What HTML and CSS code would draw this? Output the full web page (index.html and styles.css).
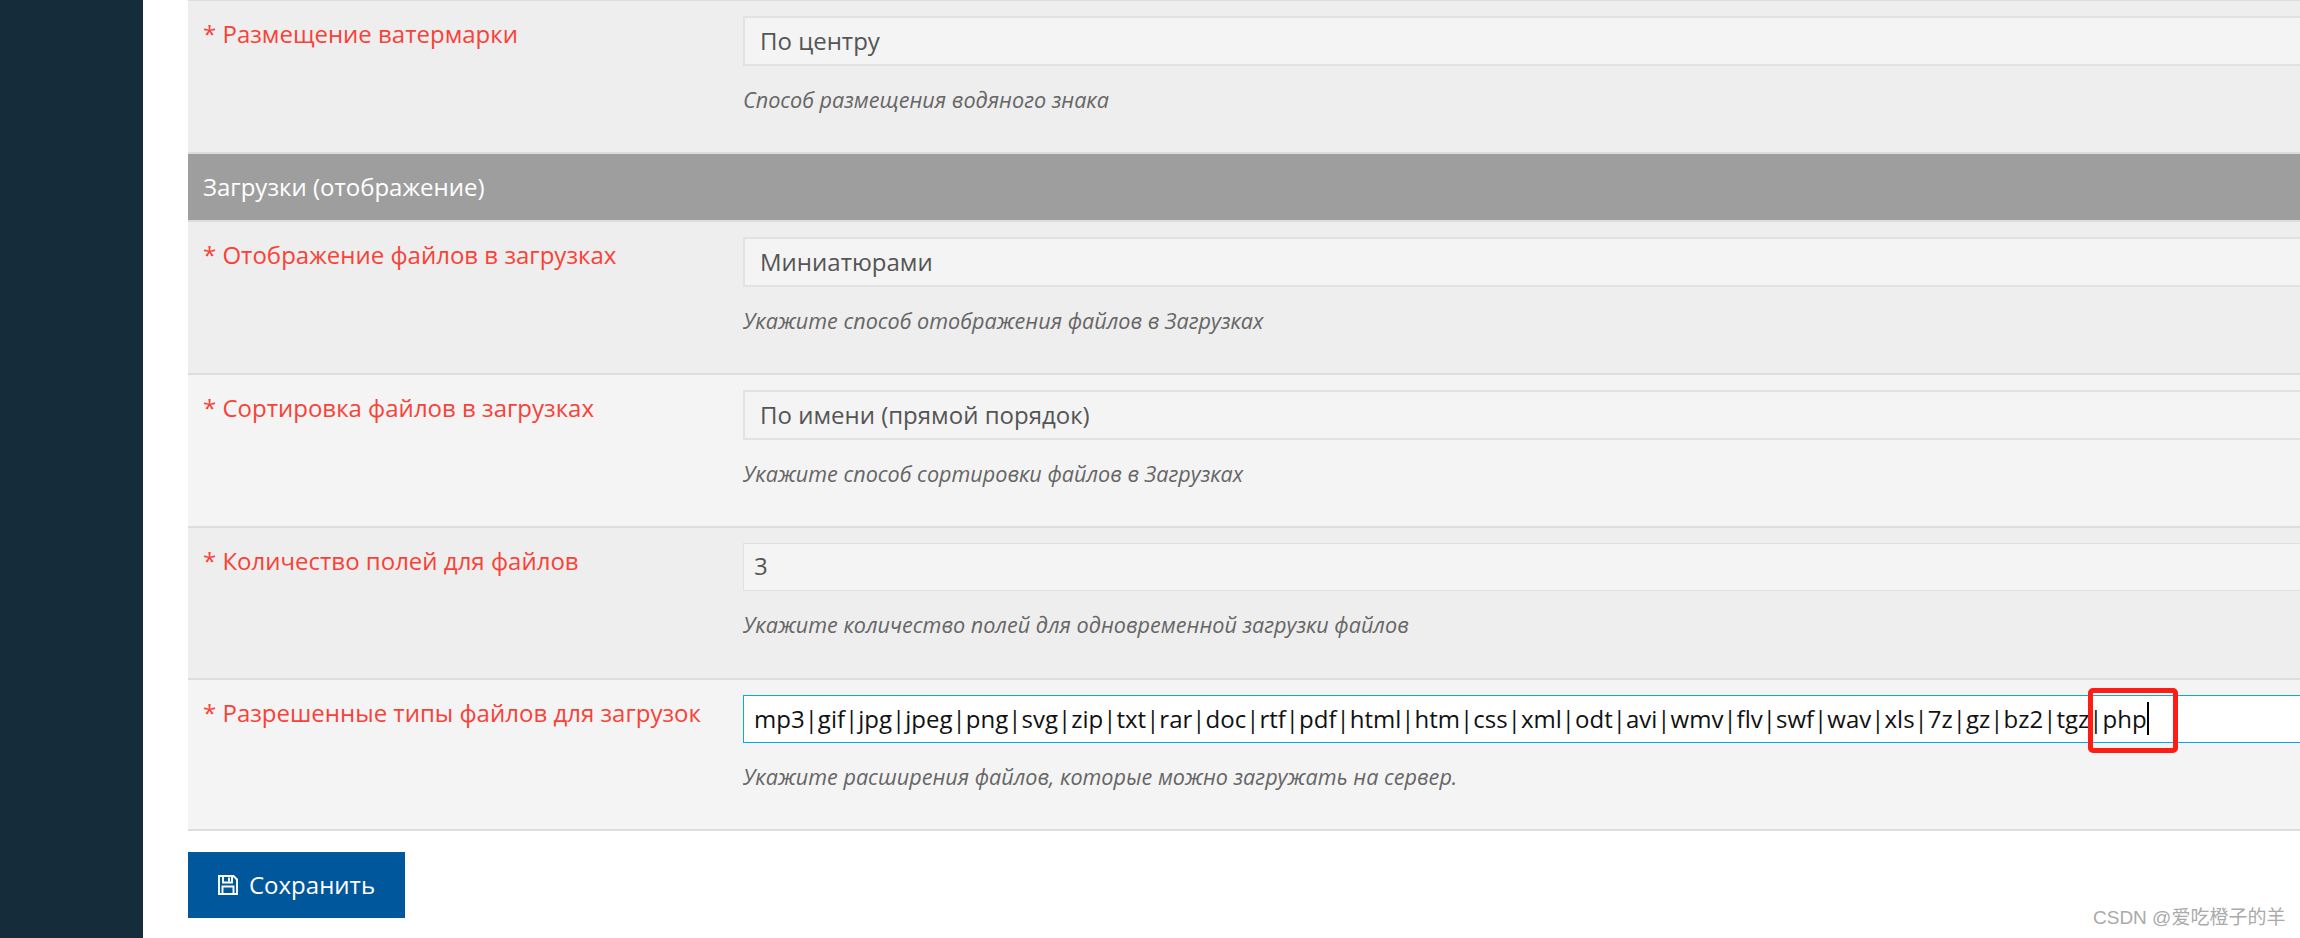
FILE: index.html
```html
<!DOCTYPE html>
<html lang="ru">
<head>
<meta charset="utf-8">
<title>Настройки</title>
<link rel="stylesheet" href="styles.css">
</head>
<body>
<div class="layout">
  <aside class="sidebar"></aside>
  <main class="content">
    <form class="settings">
      <div class="row row-alt">
        <div class="label">* Размещение ватермарки</div>
        <div class="control">
          <div class="select">По центру</div>
          <div class="help">Способ размещения водяного знака</div>
        </div>
      </div>
      <div class="section">Загрузки (отображение)</div>
      <div class="row row-alt">
        <div class="label">* Отображение файлов в загрузках</div>
        <div class="control">
          <div class="select">Миниатюрами</div>
          <div class="help">Укажите способ отображения файлов в Загрузках</div>
        </div>
      </div>
      <div class="row">
        <div class="label">* Сортировка файлов в загрузках</div>
        <div class="control">
          <div class="select">По имени (прямой порядок)</div>
          <div class="help">Укажите способ сортировки файлов в Загрузках</div>
        </div>
      </div>
      <div class="row row-alt">
        <div class="label">* Количество полей для файлов</div>
        <div class="control">
          <div class="input">3</div>
          <div class="help">Укажите количество полей для одновременной загрузки файлов</div>
        </div>
      </div>
      <div class="row">
        <div class="label">* Разрешенные типы файлов для загрузок</div>
        <div class="control">
          <div class="input input-focus"><span class="typed">mp3|gif|jpg|jpeg|png|svg|zip|txt|rar|doc|rtf|pdf|html|htm|css|xml|odt|avi|wmv|flv|swf|wav|xls|7z|gz|bz2|tgz|php</span><span class="mark"></span></div>
          <div class="help">Укажите расширения файлов, которые можно загружать на сервер.</div>
        </div>
      </div>
    </form>
    <button class="save" type="button">
      <svg class="save-icon" viewBox="0 0 20 20" aria-hidden="true"><path d="M1 1H15.5L19 4.5V19H1Z M5 1.5V7.5H14V1.5 M11 2.6V6.2 M4.5 19V11.5H15.5V19" fill="none" stroke="#fff" stroke-width="1.9"/></svg>
      <span>Сохранить</span>
    </button>
  </main>
</div>
<div class="watermark">CSDN @爱吃橙子的羊</div>
</body>
</html>
```
FILE: styles.css
```css
* { box-sizing: border-box; }
html, body { margin: 0; height: 100%; overflow: hidden; background: #fff; }
body { font-family: "Open Sans", "Noto Sans", sans-serif; font-size: 24px; color: #555; position: relative; }
.layout { display: flex; height: 938px; }
.sidebar { width: 143px; flex: none; background: #152c3b; }
.content { flex: 1; min-width: 0; padding-left: 45px; }
.settings { border-top: 1px solid #ddd; }
.row { display: grid; grid-template-columns: 540px 1fr; padding: 15px 0 37.25px 15px; background: #f4f4f4; border-bottom: 2px solid #ddd; }
.row-alt { background: #eee; }
.label { color: #f84238; line-height: 36px; }
.control { min-width: 0; }
.select { height: 50px; background: #f4f4f4; border: 2px solid #e2e2e2; border-right: 0; padding-left: 15px; line-height: 45px; color: #555; }
.input { position: relative; height: 48px; background: #f4f4f4; border: 1px solid #e0e0e0; border-right: 0; padding-left: 10px; line-height: 44px; }
.input-focus { background: #fff; border-color: #03a9f4; color: #111; }
.typed { border-right: 2px solid #000; letter-spacing: 0.015px; display: inline-block; line-height: 33px; vertical-align: top; margin-top: 6px; }
.mark { position: absolute; left: 1344px; top: -8px; width: 90px; height: 65px; border: 5px solid #ff1c14; border-radius: 5px; }
.help { margin-top: 19px; font-size: 21.6px; line-height: 30px; font-style: italic; color: #666; }
.section { height: 67.5px; background: #9e9e9e; border-bottom: 2px solid #ddd; padding-left: 15px; color: #fff; line-height: 66px; }
.save { display: flex; align-items: center; gap: 11px; width: 217px; height: 66px; margin-top: 21px; padding: 0 0 0 30px; border: 0; background: #01579b; color: #fff; font: inherit; }
.save-icon { width: 20px; height: 20px; flex: none; }
.watermark { position: absolute; left: 2093px; top: 902px; font-family: "Liberation Sans", "Noto Sans CJK SC", sans-serif; font-size: 19px; color: #aaa; white-space: nowrap; }
```
